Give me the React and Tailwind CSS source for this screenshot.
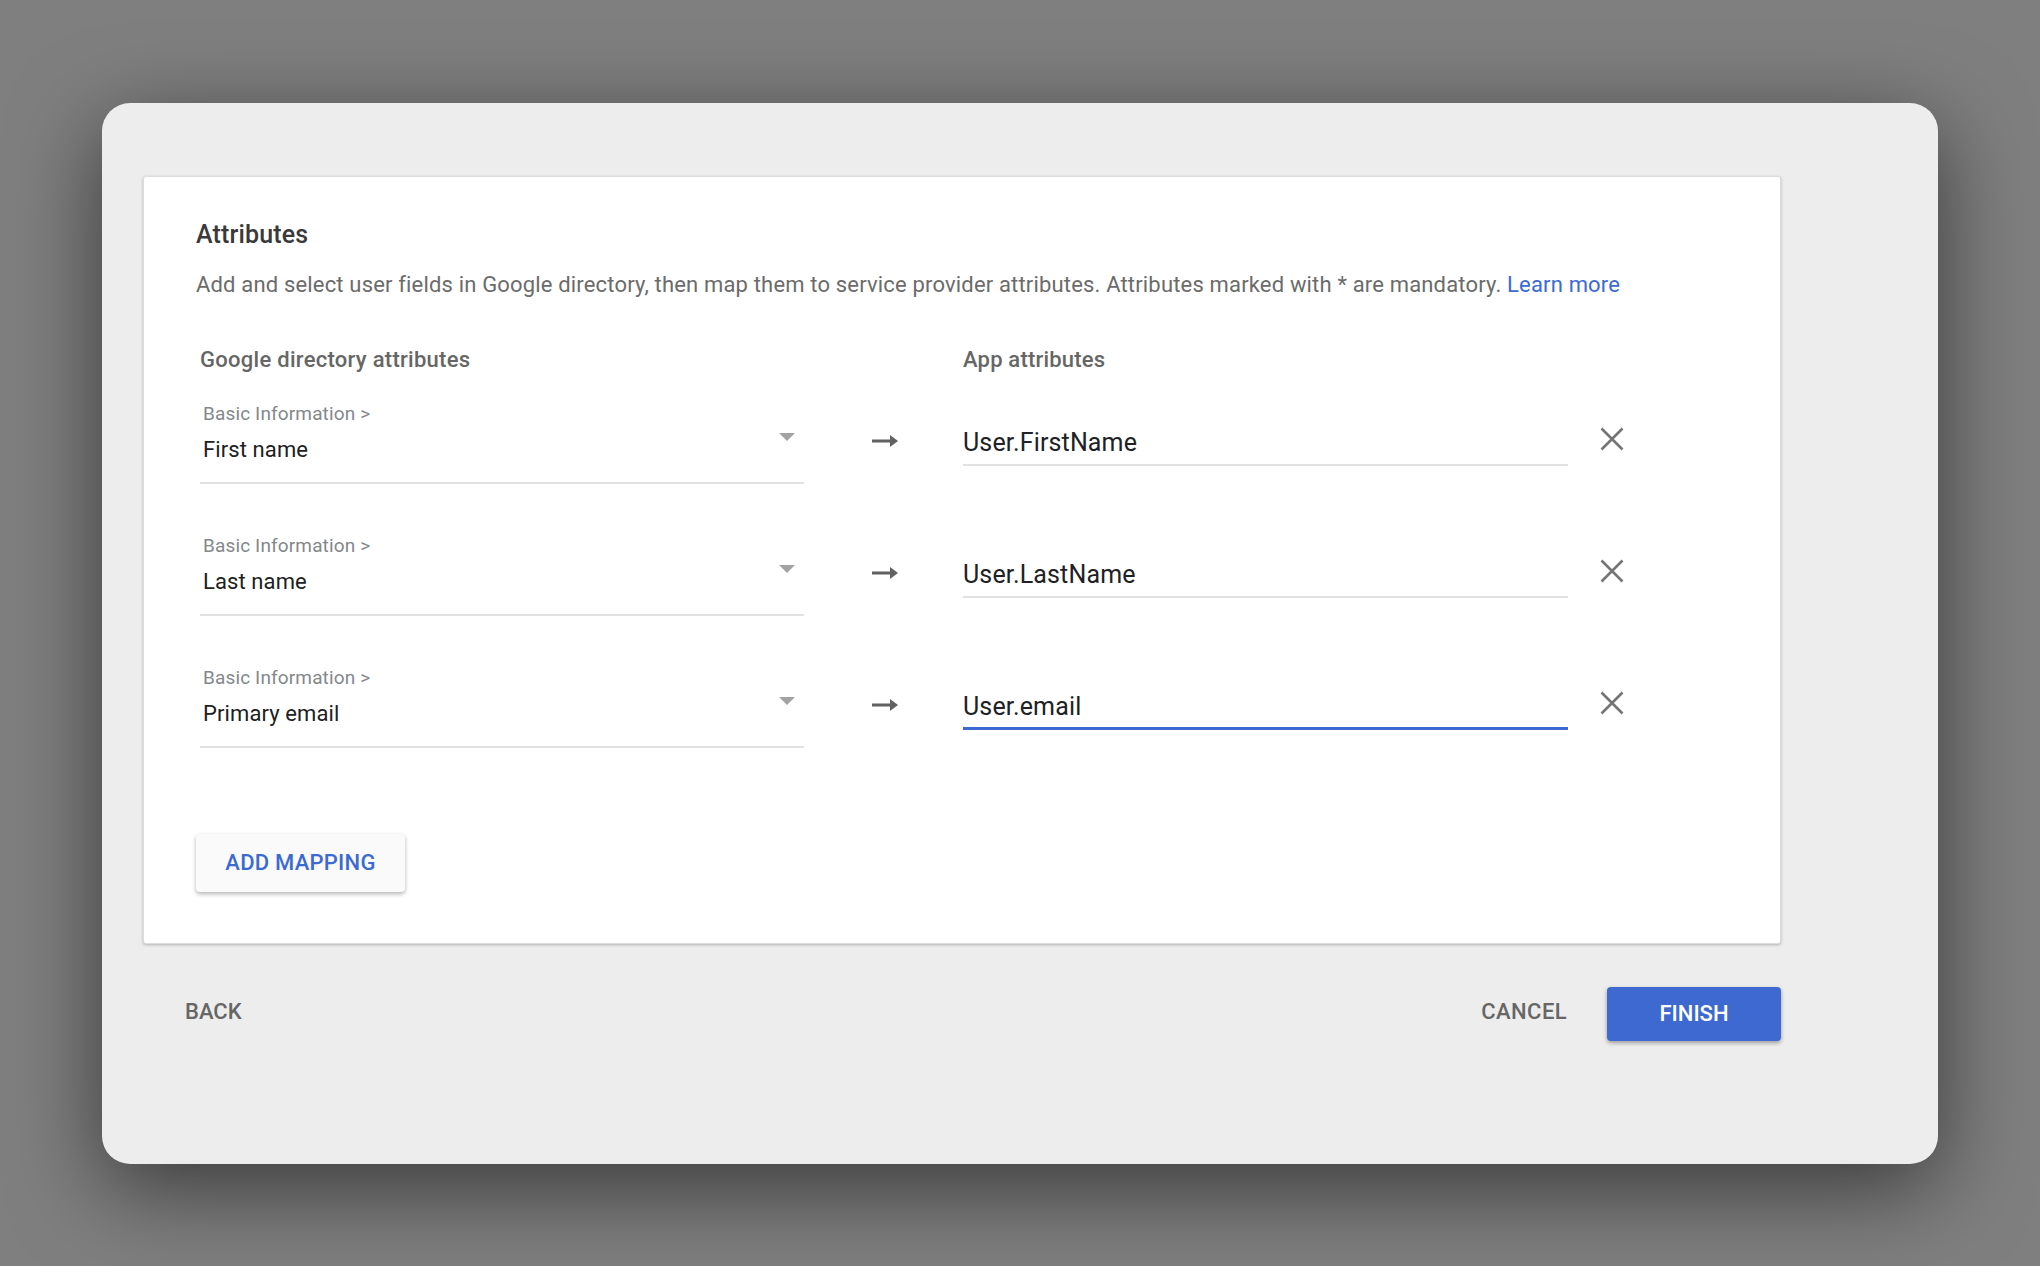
import React from 'react';

const rows = [
    { group: 'Basic Information >', field: 'First name', value: 'User.FirstName', focused: false },
    { group: 'Basic Information >', field: 'Last name', value: 'User.LastName', focused: false },
    { group: 'Basic Information >', field: 'Primary email', value: 'User.email', focused: true },
];

const ArrowIcon = () => (
    <svg width="26" height="12" viewBox="0 0 26 12" className="text-[#616161]">
        <rect x="0" y="4.5" width="19" height="3" fill="currentColor" />
        <path d="M18 0 L26 6 L18 12 Z" fill="currentColor" />
    </svg>
);

const CloseIcon = () => (
    <svg width="24" height="24" viewBox="0 0 24 24" className="text-[#757575]">
        <path d="M1.5 1.5 L22.5 22.5 M22.5 1.5 L1.5 22.5" stroke="currentColor" strokeWidth="2.6" fill="none" />
    </svg>
);

const MappingRow = ({ group, field, value, focused }) => (
    <div className="flex items-start h-[132px]">
        {/* Google directory select */}
        <div className="relative w-[604px] pb-[17px] border-b-2 border-[#e2e2e2]">
            <div className="pl-[3px] text-[19px] leading-[28px] tracking-[0.14px] text-[#84878b]">{group}</div>
            <div className="pl-[3px] mt-[7px] text-[22px] leading-[30px] tracking-[0.1px] text-[#212121]">{field}</div>
            <div className="absolute right-[9px] top-[33px] w-0 h-0 border-l-[8.5px] border-r-[8.5px] border-t-[8px] border-l-transparent border-r-transparent border-t-[#a3a3a3]" />
        </div>

        <div className="w-[159px] flex justify-center mt-[35px] pl-[2px]">
            <ArrowIcon />
        </div>

        {/* App attribute input */}
        <div
            className={`w-[605px] mt-[27px] text-[25px] leading-[32px] tracking-[0.15px] text-[#202124] ${
                focused ? 'pb-[4px] border-b-[3px] border-[#3d69d3]' : 'pb-[5px] border-b-2 border-[#e2e2e2]'
            }`}
        >
            {value}
        </div>

        <button className="ml-[32px] mt-[27px]">
            <CloseIcon />
        </button>
    </div>
);

export default function App() {
    return (
        <div
            className="min-h-screen w-full bg-[#7f7f7f] flex items-center justify-center"
            style={{ fontFamily: 'Roboto, "Liberation Sans", sans-serif' }}
        >
            <div className="w-[1836px] h-[1061px] bg-[#ededed] rounded-[28px] shadow-[0_24px_90px_rgba(0,0,0,0.55)] pl-[41px] pt-[73px]">
                {/* Attributes card */}
                <div className="w-[1638px] h-[768px] bg-white border border-[#dcdcdc] rounded-[3px] shadow-[0_1px_3px_rgba(0,0,0,0.25)] pl-[52px] pt-[42px]">
                    <h2 className="text-[25px] leading-[32px] tracking-[0.15px] font-medium text-[#3a3a3a]">Attributes</h2>
                    <p className="mt-[18px] text-[22px] leading-[31px] tracking-[0.17px] text-[#6b6b6b]">
                        Add and select user fields in Google directory, then map them to service provider attributes. Attributes marked with * are mandatory.{' '}
                        <a className="text-[#3c6ad3]">Learn more</a>
                    </p>

                    <div className="pl-[4px]">
                        <div className="flex mt-[45px] text-[22px] leading-[30px] font-medium text-[#666666]">
                            <div className="w-[763px] tracking-[0.28px]">Google directory attributes</div>
                            <div className="tracking-[0.19px]">App attributes</div>
                        </div>

                        <div className="mt-[25px]">
                            {rows.map((r) => (
                                <MappingRow key={r.value} {...r} />
                            ))}
                        </div>

                        <button className="mt-[38px] -ml-[4px] w-[209px] h-[58px] bg-[#fafafa] rounded-[4px] shadow-[0_2px_4px_rgba(0,0,0,0.3)] text-[22px] tracking-[0.24px] font-medium text-[#3c6ad3]">
                            ADD MAPPING
                        </button>
                    </div>
                </div>

                {/* Footer */}
                <div className="w-[1638px] flex items-center mt-[43px]">
                    <button className="ml-[42px] text-[22px] font-medium text-[#666666] -mt-[4px]">BACK</button>
                    <div className="flex-1" />
                    <button className="mr-[40px] text-[22px] tracking-[0.4px] font-medium text-[#666666] -mt-[4px]">CANCEL</button>
                    <button className="w-[174px] h-[54px] bg-[#3d69d1] rounded-[4px] shadow-[0_2px_4px_rgba(0,0,0,0.35)] text-[22px] font-medium text-white">
                        FINISH
                    </button>
                </div>
            </div>
        </div>
    );
}
